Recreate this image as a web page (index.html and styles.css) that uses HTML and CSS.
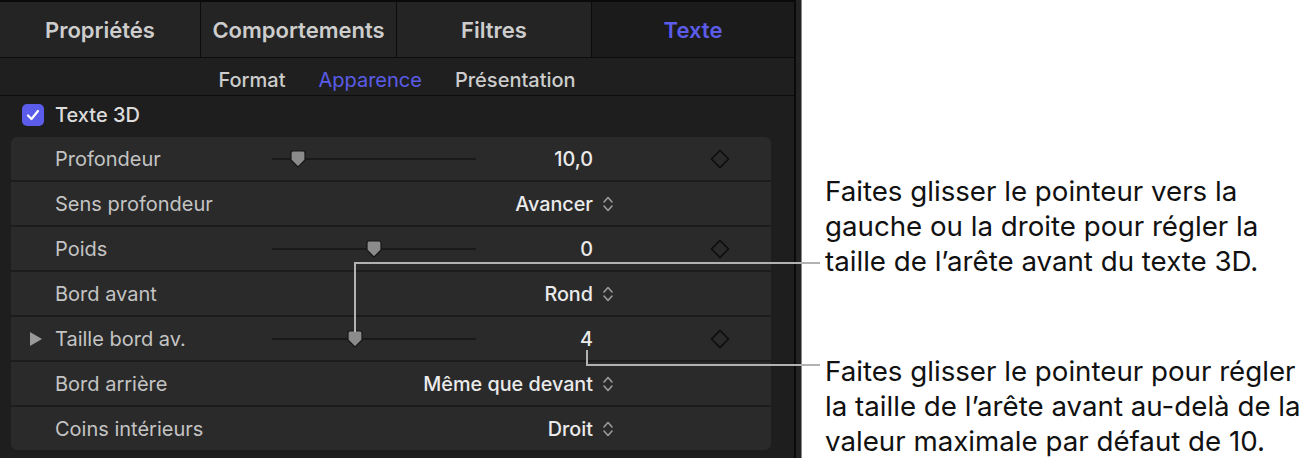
FILE: index.html
```html
<!DOCTYPE html>
<html lang="fr">
<head>
<meta charset="utf-8">
<title>Texte 3D</title>
<link rel="stylesheet" href="styles.css">
</head>
<body>
<div class="figure">
  <div class="panel">
    <div class="tabs">
      <div class="tab">Propriétés</div>
      <div class="tab">Comportements</div>
      <div class="tab">Filtres</div>
      <div class="tab tab-active">Texte</div>
    </div>
    <div class="subtabs">
      <span class="subtab">Format</span>
      <span class="subtab subtab-active">Apparence</span>
      <span class="subtab">Présentation</span>
    </div>
    <div class="section-head">
      <span class="checkbox"><svg width="14" height="12" viewBox="0 0 14 12"><path d="M2 6.5 L5.5 10 L12 2" fill="none" stroke="#fff" stroke-width="2.2" stroke-linecap="round" stroke-linejoin="round"/></svg></span>
      <span class="section-title">Texte 3D</span>
    </div>
    <div class="group">
      <div class="row">
        <span class="disc"></span>
        <span class="label">Profondeur</span>
        <span class="slider"><span class="track"></span><span class="thumb" style="left:12.7%"><svg width="16" height="18" viewBox="0 0 16 18"><path d="M3 1 H13 Q15 1 15 3 V10 L8 17 L1 10 V3 Q1 1 3 1 Z" fill="#8b8b8b" stroke="#161616" stroke-width="1.2"/></svg></span></span>
        <span class="value">10,0</span>
        <span class="pop"></span>
        <span class="key"><svg width="20" height="20" viewBox="0 0 20 20"><path d="M10 1.5 L18.5 10 L10 18.5 L1.5 10 Z" fill="none" stroke="#0e0e0e" stroke-width="1.6"/></svg></span>
      </div>
      <div class="row">
        <span class="disc"></span>
        <span class="label">Sens profondeur</span>
        <span class="slider"></span>
        <span class="value">Avancer</span>
        <span class="pop"><svg width="12" height="18" viewBox="0 0 12 18"><path d="M2 7 L6 2.5 L10 7 M2 11 L6 15.5 L10 11" fill="none" stroke="#9a9a9a" stroke-width="1.6" stroke-linecap="round" stroke-linejoin="round"/></svg></span>
        <span class="key"></span>
      </div>
      <div class="row">
        <span class="disc"></span>
        <span class="label">Poids</span>
        <span class="slider"><span class="track"></span><span class="thumb" style="left:50%"><svg width="16" height="18" viewBox="0 0 16 18"><path d="M3 1 H13 Q15 1 15 3 V10 L8 17 L1 10 V3 Q1 1 3 1 Z" fill="#8b8b8b" stroke="#161616" stroke-width="1.2"/></svg></span></span>
        <span class="value">0</span>
        <span class="pop"></span>
        <span class="key"><svg width="20" height="20" viewBox="0 0 20 20"><path d="M10 1.5 L18.5 10 L10 18.5 L1.5 10 Z" fill="none" stroke="#0e0e0e" stroke-width="1.6"/></svg></span>
      </div>
      <div class="row">
        <span class="disc"></span>
        <span class="label">Bord avant</span>
        <span class="slider"></span>
        <span class="value">Rond</span>
        <span class="pop"><svg width="12" height="18" viewBox="0 0 12 18"><path d="M2 7 L6 2.5 L10 7 M2 11 L6 15.5 L10 11" fill="none" stroke="#9a9a9a" stroke-width="1.6" stroke-linecap="round" stroke-linejoin="round"/></svg></span>
        <span class="key"></span>
      </div>
      <div class="row">
        <span class="disc"><svg width="14" height="16" viewBox="0 0 14 16"><path d="M1 1 L13 8 L1 15 Z" fill="#9a9a9a"/></svg></span>
        <span class="label">Taille bord av.</span>
        <span class="slider"><span class="track"></span><span class="thumb" style="left:40.5%"><svg width="16" height="18" viewBox="0 0 16 18"><path d="M3 1 H13 Q15 1 15 3 V10 L8 17 L1 10 V3 Q1 1 3 1 Z" fill="#8b8b8b" stroke="#161616" stroke-width="1.2"/></svg></span></span>
        <span class="value">4</span>
        <span class="pop"></span>
        <span class="key"><svg width="20" height="20" viewBox="0 0 20 20"><path d="M10 1.5 L18.5 10 L10 18.5 L1.5 10 Z" fill="none" stroke="#0e0e0e" stroke-width="1.6"/></svg></span>
      </div>
      <div class="row">
        <span class="disc"></span>
        <span class="label">Bord arrière</span>
        <span class="slider"></span>
        <span class="value">Même que devant</span>
        <span class="pop"><svg width="12" height="18" viewBox="0 0 12 18"><path d="M2 7 L6 2.5 L10 7 M2 11 L6 15.5 L10 11" fill="none" stroke="#9a9a9a" stroke-width="1.6" stroke-linecap="round" stroke-linejoin="round"/></svg></span>
        <span class="key"></span>
      </div>
      <div class="row">
        <span class="disc"></span>
        <span class="label">Coins intérieurs</span>
        <span class="slider"></span>
        <span class="value">Droit</span>
        <span class="pop"><svg width="12" height="18" viewBox="0 0 12 18"><path d="M2 7 L6 2.5 L10 7 M2 11 L6 15.5 L10 11" fill="none" stroke="#9a9a9a" stroke-width="1.6" stroke-linecap="round" stroke-linejoin="round"/></svg></span>
        <span class="key"></span>
      </div>
    </div>
  </div>
  <div class="edge"></div>
  <div class="callouts">
    <p class="callout">Faites glisser le pointeur vers la<br>gauche ou la droite pour régler la<br>taille de l’arête avant du texte 3D.</p>
    <p class="callout">Faites glisser le pointeur pour régler<br>la taille de l’arête avant au-delà de la<br>valeur maximale par défaut de 10.</p>
  </div>
  <div class="leader leader-1v"></div>
  <div class="leader leader-1h"></div>
  <div class="leader leader-2v"></div>
  <div class="leader leader-2h"></div>
</div>
</body>
</html>
```

FILE: styles.css
```css
* { box-sizing: border-box; }

html, body {
  margin: 0;
  padding: 0;
  background: #ffffff;
  height: 458px;
  overflow: hidden;
}

body {
  font-family: Inter, "Liberation Sans", sans-serif;
}

.figure {
  position: relative;
  display: flex;
  height: 458px;
}

.panel {
  width: 796px;
  height: 458px;
  flex: none;
  background: #1e1e1e;
  border-top: 2px solid #0a0a0a;
  border-right: 2px solid #0a0a0a;
  display: flex;
  flex-direction: column;
}

.tabs {
  display: grid;
  grid-template-columns: 200px 195px 194px 1fr;
  column-gap: 1px;
  background: #0c0c0c;
  height: 56px;
  border-bottom: 1px solid #0c0c0c;
}

.tab {
  background: #242424;
  color: #cdcdcd;
  font-size: 22px;
  font-weight: 600;
  display: flex;
  align-items: center;
  justify-content: center;
  padding-top: 1px;
}

.tab-active {
  background: #1b1b1b;
  color: #5b5ce9;
}

.subtabs {
  height: 38px;
  display: flex;
  justify-content: center;
  align-items: center;
  gap: 33px;
  padding-top: 6px;
  background: #1f1f1f;
  border-bottom: 1px solid #0c0c0c;
}

.subtab {
  font-size: 20px;
  font-weight: 500;
  color: #cdcdcd;
}

.subtab-active {
  color: #5b5ce9;
  font-weight: 400;
}

.section-head {
  height: 41px;
  display: flex;
  align-items: center;
  padding-left: 22px;
  padding-bottom: 4px;
  gap: 11px;
}

.checkbox {
  width: 22px;
  height: 22px;
  border-radius: 5px;
  background: #5b5ce9;
  display: flex;
  align-items: center;
  justify-content: center;
}

.section-title {
  font-size: 20px;
  font-weight: 500;
  color: #dcdcdc;
}

.group {
  margin-left: 11px;
  width: 760px;
  background: #1c1c1c;
  border-radius: 6px;
  overflow: hidden;
  display: flex;
  flex-direction: column;
  gap: 2px;
}

.row {
  height: 43px;
  background: #2a2a2a;
  display: grid;
  grid-template-columns: 44px 217px 204px 117px 34px 1fr;
  align-items: center;
}

.disc {
  display: flex;
  align-items: center;
  padding-left: 18px;
}

.label {
  font-size: 20px;
  color: #c4c4c4;
  white-space: nowrap;
}

.slider {
  position: relative;
  height: 43px;
}

.track {
  position: absolute;
  left: 0;
  right: 0;
  top: 21px;
  height: 2px;
  background: #1a1a1a;
}

.thumb {
  position: absolute;
  top: 13px;
  width: 16px;
  height: 18px;
  transform: translateX(-50%);
  display: block;
}

.thumb svg { display: block; }

.value {
  display: flex;
  justify-content: flex-end;
  font-size: 19.8px;
  font-weight: 500;
  color: #ebebeb;
  white-space: nowrap;
}

.pop {
  display: flex;
  align-items: center;
  padding-left: 9px;
  padding-top: 1px;
}

.key {
  display: flex;
  align-items: center;
  padding-left: 83px;
}

.edge {
  width: 6px;
  flex: none;
  height: 458px;
  background: #232323;
  border-right: 1px solid #8a8a8a;
}

.callouts {
  padding-left: 23px;
  padding-top: 174px;
  display: flex;
  flex-direction: column;
  gap: 75px;
}

.callout {
  margin: 0;
  font-size: 27.7px;
  line-height: 35px;
  color: #111111;
  white-space: nowrap;
}

.leader {
  position: absolute;
  background: #b2b2b2;
}

.leader-1v { left: 354px; top: 262px; width: 2px; height: 70px; }
.leader-1h { left: 354px; top: 262px; width: 466px; height: 2px; }
.leader-2v { left: 586px; top: 350px; width: 2px; height: 16px; }
.leader-2h { left: 586px; top: 364px; width: 234px; height: 2px; }
```
